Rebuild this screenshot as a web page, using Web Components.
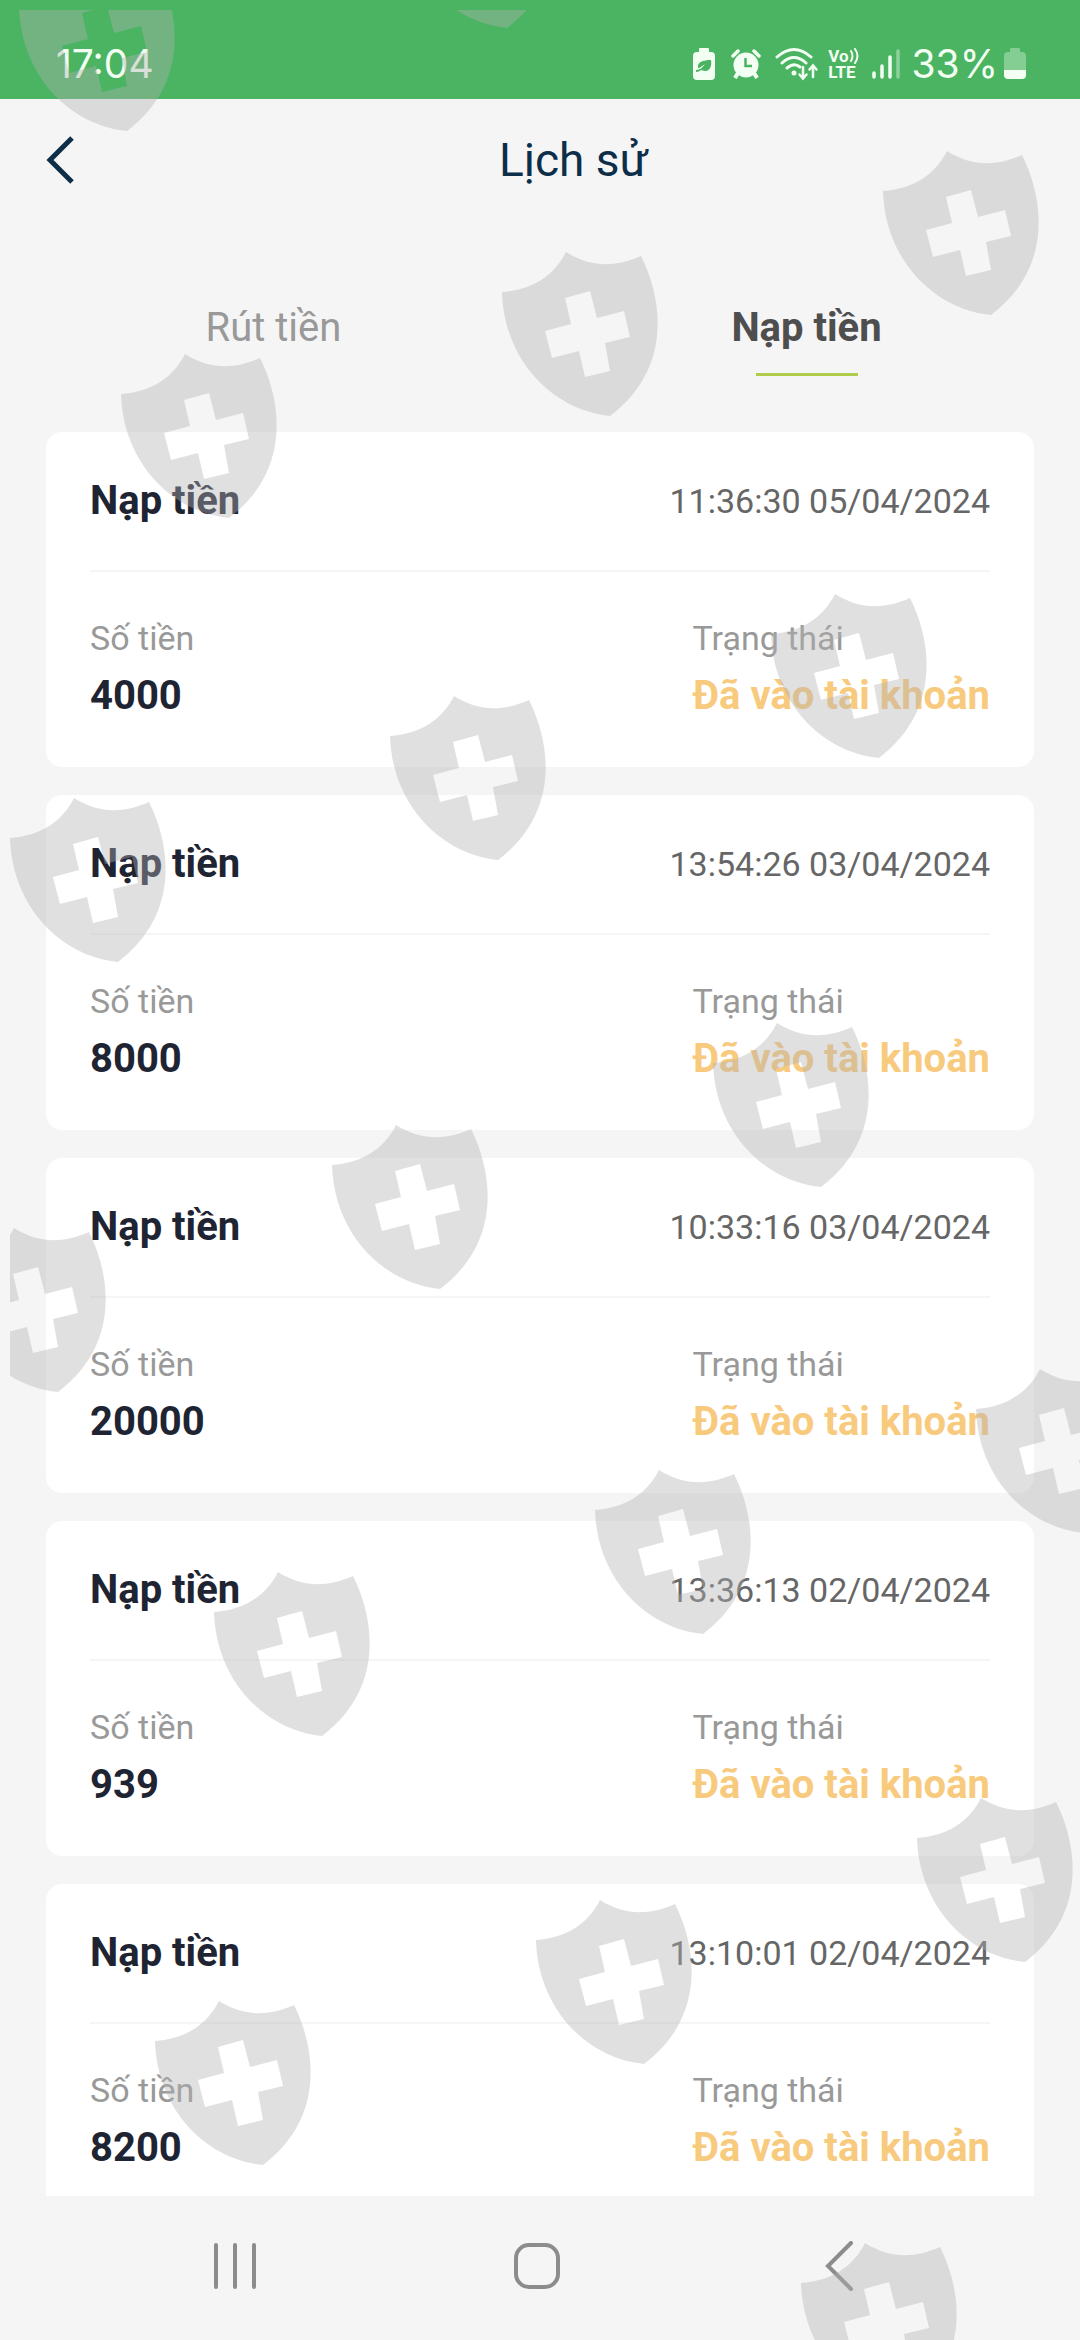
<!DOCTYPE html>
<html lang="vi">
<head>
<meta charset="utf-8">
<meta name="viewport" content="width=device-width, initial-scale=1">
<title>Lịch sử</title>
<style>
  html, body { margin: 0; height: 100%; }
  body { background: #f5f5f5; font-family: Roboto, "Noto Sans", sans-serif; overflow: hidden; }
</style>
</head>
<body>
<app-screen>
  <status-bar slot="status" time="17:04" battery="33%"></status-bar>
  <page-header slot="header">Lịch sử</page-header>
  <tab-bar slot="tabs">
    <tab-item>Rút tiền</tab-item>
    <tab-item selected>Nạp tiền</tab-item>
  </tab-bar>
  <history-card time="11:36:30 05/04/2024" amount="4000">Nạp tiền</history-card>
  <history-card time="13:54:26 03/04/2024" amount="8000">Nạp tiền</history-card>
  <history-card time="10:33:16 03/04/2024" amount="20000">Nạp tiền</history-card>
  <history-card time="13:36:13 02/04/2024" amount="939">Nạp tiền</history-card>
  <history-card time="13:10:01 02/04/2024" amount="8200">Nạp tiền</history-card>
  <system-nav slot="nav"></system-nav>
  <shield-pattern slot="overlay"></shield-pattern>
</app-screen>

<script>
const define = (name, html, setup) => {
  customElements.define(name, class extends HTMLElement {
    constructor() {
      super();
      this.attachShadow({ mode: 'open' }).innerHTML = html;
    }
    connectedCallback() { if (setup) setup(this, this.shadowRoot); }
  });
};

define('app-screen', `
  <style>
    :host { display: flex; flex-direction: column; height: 100vh; position: relative; overflow: hidden; background: #f5f5f5; }
    main { flex: 1; min-height: 0; overflow: hidden; display: flex; flex-direction: column; gap: 28px; padding: 56px 46px 0; box-sizing: border-box; }
  </style>
  <slot name="status"></slot>
  <slot name="header"></slot>
  <slot name="tabs"></slot>
  <main><slot></slot></main>
  <slot name="nav"></slot>
  <slot name="overlay"></slot>`);

define('status-bar', `
  <style>
    :host { display: flex; justify-content: space-between; align-items: center; height: 99px; flex: none; box-sizing: border-box;
      padding: 28px 54px 0 56px; background: #4ab462; color: #f2fff2; font: 400 39px/44px Inter, sans-serif; }
    .icons { display: flex; align-items: center; }
    svg { display: block; fill: currentColor; }
    .leaf { margin-right: 16px; }
    .alarm { margin-right: 14px; }
    .wifi { margin-right: 9px; }
    .volte { display: flex; flex-direction: column; margin-right: 12px; font: 700 17px/16px Roboto, sans-serif; }
    .vo { display: flex; align-items: center; }
    .signal { margin-right: 12px; }
    .pct { margin-right: 6px; }
  </style>
  <span class="time"></span>
  <div class="icons">
    <svg class="leaf" width="22" height="32" viewBox="0 0 22 32"><path d="M7 0h8q1 0 1 1v3h2q4 0 4 4v20q0 4-4 4H4q-4 0-4-4V8q0-4 4-4h2V1q0-1 1-1z"/><path d="M18 12c1 6-1 11-6 11-2 0-3-1-4-1-1 1-3 2-5 2v-2c4 0 7-3 9-6-3 2-5 4-7 4-1-6 5-8 13-8z" fill="#4ab462"/></svg>
    <svg class="alarm" width="30" height="30" viewBox="0 0 30 30"><circle cx="15" cy="16" r="12.500"/><path d="M2 7l5-5M28 7l-5-5" stroke="currentColor" stroke-width="3.500" stroke-linecap="round"/><path d="M7 24l-3 5M23 24l3 5" stroke="currentColor" stroke-width="4"/><path d="M14.500 9v8H21" fill="none" stroke="#4ab462" stroke-width="2.500"/></svg>
    <svg class="wifi" width="44" height="34" viewBox="0 0 44 34"><g fill="none" stroke="currentColor" stroke-width="3" stroke-linecap="round"><path d="M2 10Q19-5 36 10M7 16Q19 5 31 16M12 21Q19 15 25 20"/><path d="M28 20v11M24.500 27.500L28 31.500l3.500-4M38 30V19M34.500 22.500L38 18.500l3.500 4" stroke-width="2.500"/></g><circle cx="19" cy="26" r="2.500"/></svg>
    <div class="volte"><span class="vo">Vo<svg width="11" height="16" viewBox="0 0 11 16"><path d="M2 3q3 5 0 10M6 1q5 7 0 14" fill="none" stroke="currentColor" stroke-width="2" stroke-linecap="round"/></svg></span><span>LTE</span></div>
    <svg class="signal" width="28" height="30" viewBox="0 0 28 30"><g stroke="currentColor" stroke-width="3.500" stroke-linecap="round"><path d="M2 24v4M10 17v11M18 8v20"/><path d="M26 2v26" opacity=".4"/></g></svg>
    <span class="pct"></span>
    <svg width="22" height="31" viewBox="0 0 22 31"><path d="M7 0h8q1 0 1 1v3h2q4 0 4 4v14H0V8q0-4 4-4h2V1q0-1 1-1z" opacity=".35"/><path d="M0 22h22v5q0 4-4 4H4q-4 0-4-4z"/></svg>
  </div>`, (el, root) => {
    root.querySelector('.time').textContent = el.getAttribute('time');
    root.querySelector('.pct').textContent = el.getAttribute('battery');
  });

define('page-header', `
  <style>
    :host { display: flex; align-items: center; height: 122px; flex: none; color: #0d2e48; }
    button { flex: none; width: 67px; padding: 0 0 0 46px; margin: 0; border: 0; background: none; color: inherit; overflow: visible; }
    svg { display: block; }
    h1 { flex: 1; margin: 0; font-size: 46px; line-height: 60px; font-weight: 400; text-align: center; }
  </style>
  <button type="button" aria-label="Quay lại"><svg width="28" height="48" viewBox="0 0 28 48"><path d="M26 2L4 24l22 22" fill="none" stroke="currentColor" stroke-width="5"/></svg></button>
  <h1><slot></slot></h1>`);

define('tab-bar', `
  <style>
    :host { display: flex; flex: none; padding: 71px 7px 0; }
  </style>
  <slot></slot>`);

define('tab-item', `
  <style>
    :host { flex: 1; display: flex; }
    button { flex: 1; display: flex; flex-direction: column; align-items: center; gap: 9px; margin: 0; padding: 0; border: 0; background: none;
      font: 400 40px/72px Roboto, "Noto Sans", sans-serif; color: #999; }
    button::after { content: ""; width: 102px; height: 3px; }
    :host([selected]) button { font-weight: 700; color: #4e4e4e; }
    :host([selected]) button::after { background: #afcd4b; }
  </style>
  <button type="button"><span><slot></slot></span></button>`);

define('history-card', `
  <style>
    :host { display: block; flex: none; padding: 0 44px; border-radius: 16px; background: #fff; color: #1f2433; }
    header { display: flex; align-items: center; justify-content: space-between; height: 138px; border-bottom: 2px solid #f5f5f5; }
    h2 { margin: 0; font-size: 40px; line-height: 58px; font-weight: 700; }
    time { font-size: 34px; line-height: 58px; color: #666; }
    dl { display: flex; justify-content: space-between; margin: 0; padding: 37px 0 42px; }
    dt { font-size: 34px; line-height: 58px; color: #999; }
    dd { margin: 0; font-size: 40px; line-height: 58px; font-weight: 700; }
    .state { color: #f8ca7e; }
  </style>
  <header><h2><slot></slot></h2><time></time></header>
  <dl>
    <div><dt>Số tiền</dt><dd class="amount"></dd></div>
    <div><dt>Trạng thái</dt><dd class="state">Đã vào tài khoản</dd></div>
  </dl>`, (el, root) => {
    root.querySelector('time').textContent = el.getAttribute('time');
    root.querySelector('.amount').textContent = el.getAttribute('amount');
  });

define('system-nav', `
  <style>
    :host { display: flex; flex: none; height: 144px; padding: 0 90px 4px 84px; box-sizing: border-box; background: #f5f5f5; color: #8c8c8c; }
    button { flex: 1; display: flex; align-items: center; justify-content: center; margin: 0; padding: 0; border: 0; background: none; color: inherit; }
    svg { fill: none; stroke: currentColor; stroke-width: 4; stroke-linecap: round; }
  </style>
  <button type="button" aria-label="Gần đây"><svg width="48" height="48" viewBox="0 0 48 48"><path d="M5 3v42M24 3v42M43 3v42"/></svg></button>
  <button type="button" aria-label="Trang chủ"><svg width="48" height="48" viewBox="0 0 48 48"><rect x="3" y="3" width="42" height="42" rx="13"/></svg></button>
  <button type="button" aria-label="Trở về"><svg width="30" height="50" viewBox="0 0 30 50"><path d="M27 2L4 25l23 23"/></svg></button>`);

define('shield-pattern', `
  <style>
    :host { position: absolute; inset: 10px 0 0 10px; overflow: hidden; pointer-events: none; }
    svg { display: block; width: 100%; height: 100%; }
  </style>
  <svg aria-hidden="true">
    <defs><path id="shield" fill-rule="evenodd" d="M0 40C30 38 52 24 64 0C88 15 112 16 139 4C162 50 169 118 108 164C50 158 2 108 0 40ZM63 46L88 39L95 66L122 59L128 85L103 91L108 119L83 125L77 99L50 106L43 79L69 72Z"/></defs>
    <g fill="#b2b2b2" fill-opacity=".4" transform="translate(-10 -10)"></g>
  </svg>`, (el, root) => {
    const spots = [[399,-136],[19,-33],[883,151],[502,252],[121,354],[771,594],[390,696],[10,798],
      [713,1023],[332,1125],[-50,1228],[976,1369],[595,1470],[214,1572],[917,1798],[536,1900],[155,2001],[801,2243]];
    root.querySelector('g').innerHTML = spots.map(([x, y]) => `<use href="#shield" x="${x}" y="${y}"/>`).join('');
  });
</script>
</body>
</html>
